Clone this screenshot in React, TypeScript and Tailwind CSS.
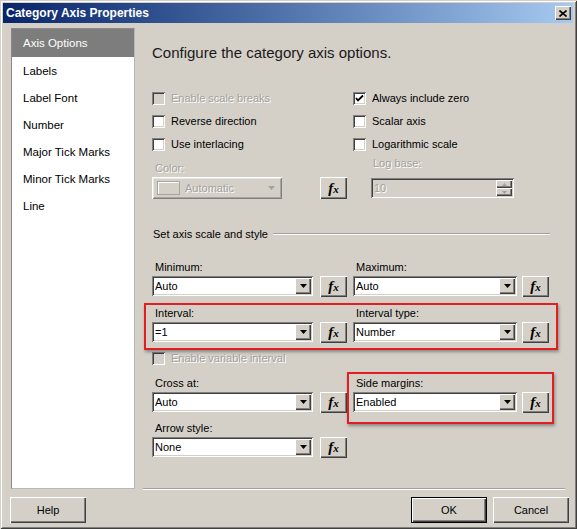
import React from "react";

const FONT = "font-['Liberation_Sans',Arial,sans-serif]";
const RAISED = "shadow-[inset_1px_1px_0_#ffffff,inset_-1px_-1px_0_#404040,inset_-2px_-2px_0_#808080]";
const SUNKEN = "shadow-[inset_1px_1px_0_#808080,inset_-1px_-1px_0_#ffffff,inset_2px_2px_0_#404040,inset_-2px_-2px_0_#d4d0c8]";
const DIS = "text-[#a3a19b] [text-shadow:1px_1px_0_#ffffff]";

function Check({ label, checked = false, disabled = false }: { label: string; checked?: boolean; disabled?: boolean }) {
  return (
    <div className="flex items-center h-[23px]">
      <div className={`w-[13px] h-[13px] flex items-center justify-center ${disabled ? "bg-[#d4d0c8]" : "bg-white"} ${SUNKEN}`}>
        {checked && (
          <svg width="9" height="9" viewBox="0 0 9 9">
            <path d="M1 4 L3 6.5 L8 1.5" fill="none" stroke="#000" strokeWidth="1.8" />
          </svg>
        )}
      </div>
      <span className={`ml-[6px] ${disabled ? DIS : "text-black"}`}>{label}</span>
    </div>
  );
}

function Arrow() {
  return (
    <svg width="7" height="4" viewBox="0 0 7 4">
      <polygon points="0,0 7,0 3.5,4" fill="#000" />
    </svg>
  );
}

function Dropdown({ value, w }: { value: string; w: string }) {
  return (
    <div className={`${w} h-[20px] bg-white flex items-stretch ${SUNKEN}`}>
      <div className="flex-1 flex items-center pl-[3px] text-black">{value}</div>
      <div className={`w-[16px] my-[2px] mr-[2px] bg-[#d4d0c8] flex items-center justify-center ${RAISED}`}>
        <Arrow />
      </div>
    </div>
  );
}

function Fx({ h = "h-[21px]" }: { h?: string }) {
  return (
    <div className={`w-[27px] ${h} bg-[#d4d0c8] flex items-center justify-center ${RAISED}`}>
      <span className="font-['Liberation_Serif',serif] italic font-bold text-[15px] leading-none text-black">
        f<span className="text-[11px]">x</span>
      </span>
    </div>
  );
}

function Field({ label, value, w, gap }: { label: string; value: string; w: string; gap: string }) {
  return (
    <div className="flex flex-col">
      <div className="h-[14px] leading-[14px] pl-[3px] text-black">{label}</div>
      <div className="flex items-start mt-[2px]">
        <Dropdown value={value} w={w} />
        <div className={gap}>
          <Fx />
        </div>
      </div>
    </div>
  );
}

function FieldRow({ a, b, className }: { a: [string, string]; b?: [string, string]; className: string }) {
  return (
    <div className={`flex ${className}`}>
      <div className="w-[201px]">
        <Field label={a[0]} value={a[1]} w="w-[161px]" gap="ml-[7px]" />
      </div>
      {b && <Field label={b[0]} value={b[1]} w="w-[164px]" gap="ml-[5px]" />}
    </div>
  );
}

function Btn({ label, def = false, className = "" }: { label: string; def?: boolean; className?: string }) {
  return (
    <div
      className={`w-[76px] h-[26px] bg-[#d4d0c8] flex items-center justify-center text-black ${
        def
          ? "border border-black shadow-[inset_1px_1px_0_#ffffff,inset_-1px_-1px_0_#404040,inset_-2px_-2px_0_#808080]"
          : RAISED
      } ${className}`}
    >
      {label}
    </div>
  );
}

export default function App() {
  const nav = ["Axis Options", "Labels", "Label Font", "Number", "Major Tick Marks", "Minor Tick Marks", "Line"];
  return (
    <div
      className={`${FONT} text-[11px] relative w-[577px] h-[529px] bg-[#d4d0c8] p-[3px] flex flex-col overflow-hidden shadow-[inset_1px_1px_0_#d4d0c8,inset_-1px_-1px_0_#404040,inset_2px_2px_0_#ffffff,inset_-2px_-2px_0_#808080]`}
    >
      {/* Title bar */}
      <div className="h-[20px] mr-[1px] flex items-center justify-between bg-gradient-to-r from-[#0a246a] to-[#a6caf0]">
        <span className="pl-[3px] text-white font-bold text-[12px] leading-none">Category Axis Properties</span>
        <div className={`w-[16px] h-[14px] mr-[2px] bg-[#d4d0c8] flex items-center justify-center ${RAISED}`}>
          <svg width="8" height="7" viewBox="0 0 8 7">
            <path d="M0.5 0.5 L7.5 6.5 M7.5 0.5 L0.5 6.5" stroke="#000" strokeWidth="1.6" />
          </svg>
        </div>
      </div>

      {/* Body */}
      <div className="flex h-[466px]">
        {/* Nav */}
        <div className="ml-[8px] mt-[5px] w-[124px] h-[461px] bg-white border border-t-[#8a8a8a] border-l-[#8a8a8a] border-r-[#b8b8b8] border-b-[#b8b8b8] flex flex-col">
          {nav.map((n, i) => (
            <div
              key={n}
              className={`${i === 0 ? "h-[28px] bg-[#7d7d7d] text-white" : "h-[27px] text-black"} flex items-center pl-[11px] pt-[2px] text-[11.5px]`}
            >
              {n}
            </div>
          ))}
        </div>

        {/* Right content */}
        <div className="flex-1 flex flex-col">
          <div className="ml-[17px] flex flex-col">
            <div className="mt-[21px] h-[18px] leading-[18px] text-[15px] text-[#1a1a1a]">
              Configure the category axis options.
            </div>

            <div className="mt-[25px] flex">
              <div className="w-[201px] flex flex-col">
                <Check label="Enable scale breaks" disabled />
                <Check label="Reverse direction" />
                <Check label="Use interlacing" />
              </div>
              <div className="flex flex-col">
                <Check label="Always include zero" checked />
                <Check label="Scalar axis" />
                <Check label="Logarithmic scale" />
              </div>
            </div>

            {/* Color / Log base */}
            <div className="flex">
              <div className="w-[201px] flex flex-col pt-[5px]">
                <div className={`h-[14px] leading-[14px] pl-[3px] ${DIS}`}>Color:</div>
                <div className="flex mt-[2px]">
                  <div className="w-[130px] h-[22px] bg-[#d4d0c8] flex items-center shadow-[inset_1px_1px_0_#ffffff,inset_-1px_-1px_0_#808080,inset_2px_2px_0_#e8e6e0,inset_-2px_-2px_0_#a8a59e]">
                    <div className="ml-[5px] w-[23px] h-[14px] border border-[#a8a59e] shadow-[inset_1px_1px_0_#ffffff]" />
                    <span className={`ml-[5px] flex-1 ${DIS}`}>Automatic</span>
                    <svg width="7" height="4" viewBox="0 0 7 4" className="mr-[7px]">
                      <polygon points="0,0 7,0 3.5,4" fill="#a3a19b" />
                    </svg>
                  </div>
                  <div className="ml-[38px]">
                    <Fx h="h-[22px]" />
                  </div>
                </div>
              </div>
              <div className="flex flex-col">
                <div className={`h-[14px] leading-[14px] pl-[20px] ${DIS}`}>Log base:</div>
                <div className={`ml-[18px] mt-[8px] w-[143px] h-[20px] bg-[#d4d0c8] flex items-stretch ${SUNKEN}`}>
                  <div className={`flex-1 flex items-center pl-[3px] ${DIS}`}>10</div>
                  <div className="w-[16px] my-[2px] mr-[2px] flex flex-col">
                    <div className={`flex-1 flex items-center justify-center ${RAISED}`}>
                      <svg width="5" height="3" viewBox="0 0 5 3">
                        <polygon points="0,3 5,3 2.5,0" fill="#a3a19b" />
                      </svg>
                    </div>
                    <div className={`flex-1 flex items-center justify-center ${RAISED}`}>
                      <svg width="5" height="3" viewBox="0 0 5 3">
                        <polygon points="0,0 5,0 2.5,3" fill="#a3a19b" />
                      </svg>
                    </div>
                  </div>
                </div>
              </div>
            </div>

            {/* Group header */}
            <div className="mt-[28px] w-[398px] h-[14px] flex items-center">
              <span className="pl-[1px] text-black">Set axis scale and style</span>
              <div className="ml-[5px] flex-1 h-[2px] border-t border-t-[#a0a0a0] border-b border-b-white" />
            </div>

            <FieldRow className="mt-[19px]" a={["Minimum:", "Auto"]} b={["Maximum:", "Auto"]} />
            <FieldRow className="mt-[9px]" a={["Interval:", "=1"]} b={["Interval type:", "Number"]} />
            <div className="mt-[4px]">
              <Check label="Enable variable interval" disabled />
            </div>
            <FieldRow className="mt-[6px]" a={["Cross at:", "Auto"]} b={["Side margins:", "Enabled"]} />
            <FieldRow className="mt-[8px]" a={["Arrow style:", "None"]} />
          </div>

          <div className="mt-auto ml-[8px] mr-[9px] mb-[-1px] h-[2px] border-t border-t-[#a0a0a0] border-b border-b-white" />
        </div>
      </div>

      {/* Buttons */}
      <div className="mt-[8px] flex items-center">
        <Btn label="Help" className="ml-[7px]" />
        <div className="flex-1" />
        <Btn label="OK" def className="w-[75px]" />
        <Btn label="Cancel" className="ml-[6px] mr-[5px]" />
      </div>

      {/* Red annotation boxes */}
      <div className="absolute left-[144px] top-[303px] w-[414px] h-[47px] border-2 border-[#e01e24] shadow-[1px_2px_3px_rgba(0,0,0,0.35)] pointer-events-none" />
      <div className="absolute left-[347px] top-[372px] w-[207px] h-[52px] border-2 border-[#e01e24] shadow-[1px_2px_3px_rgba(0,0,0,0.35)] pointer-events-none" />
    </div>
  );
}
